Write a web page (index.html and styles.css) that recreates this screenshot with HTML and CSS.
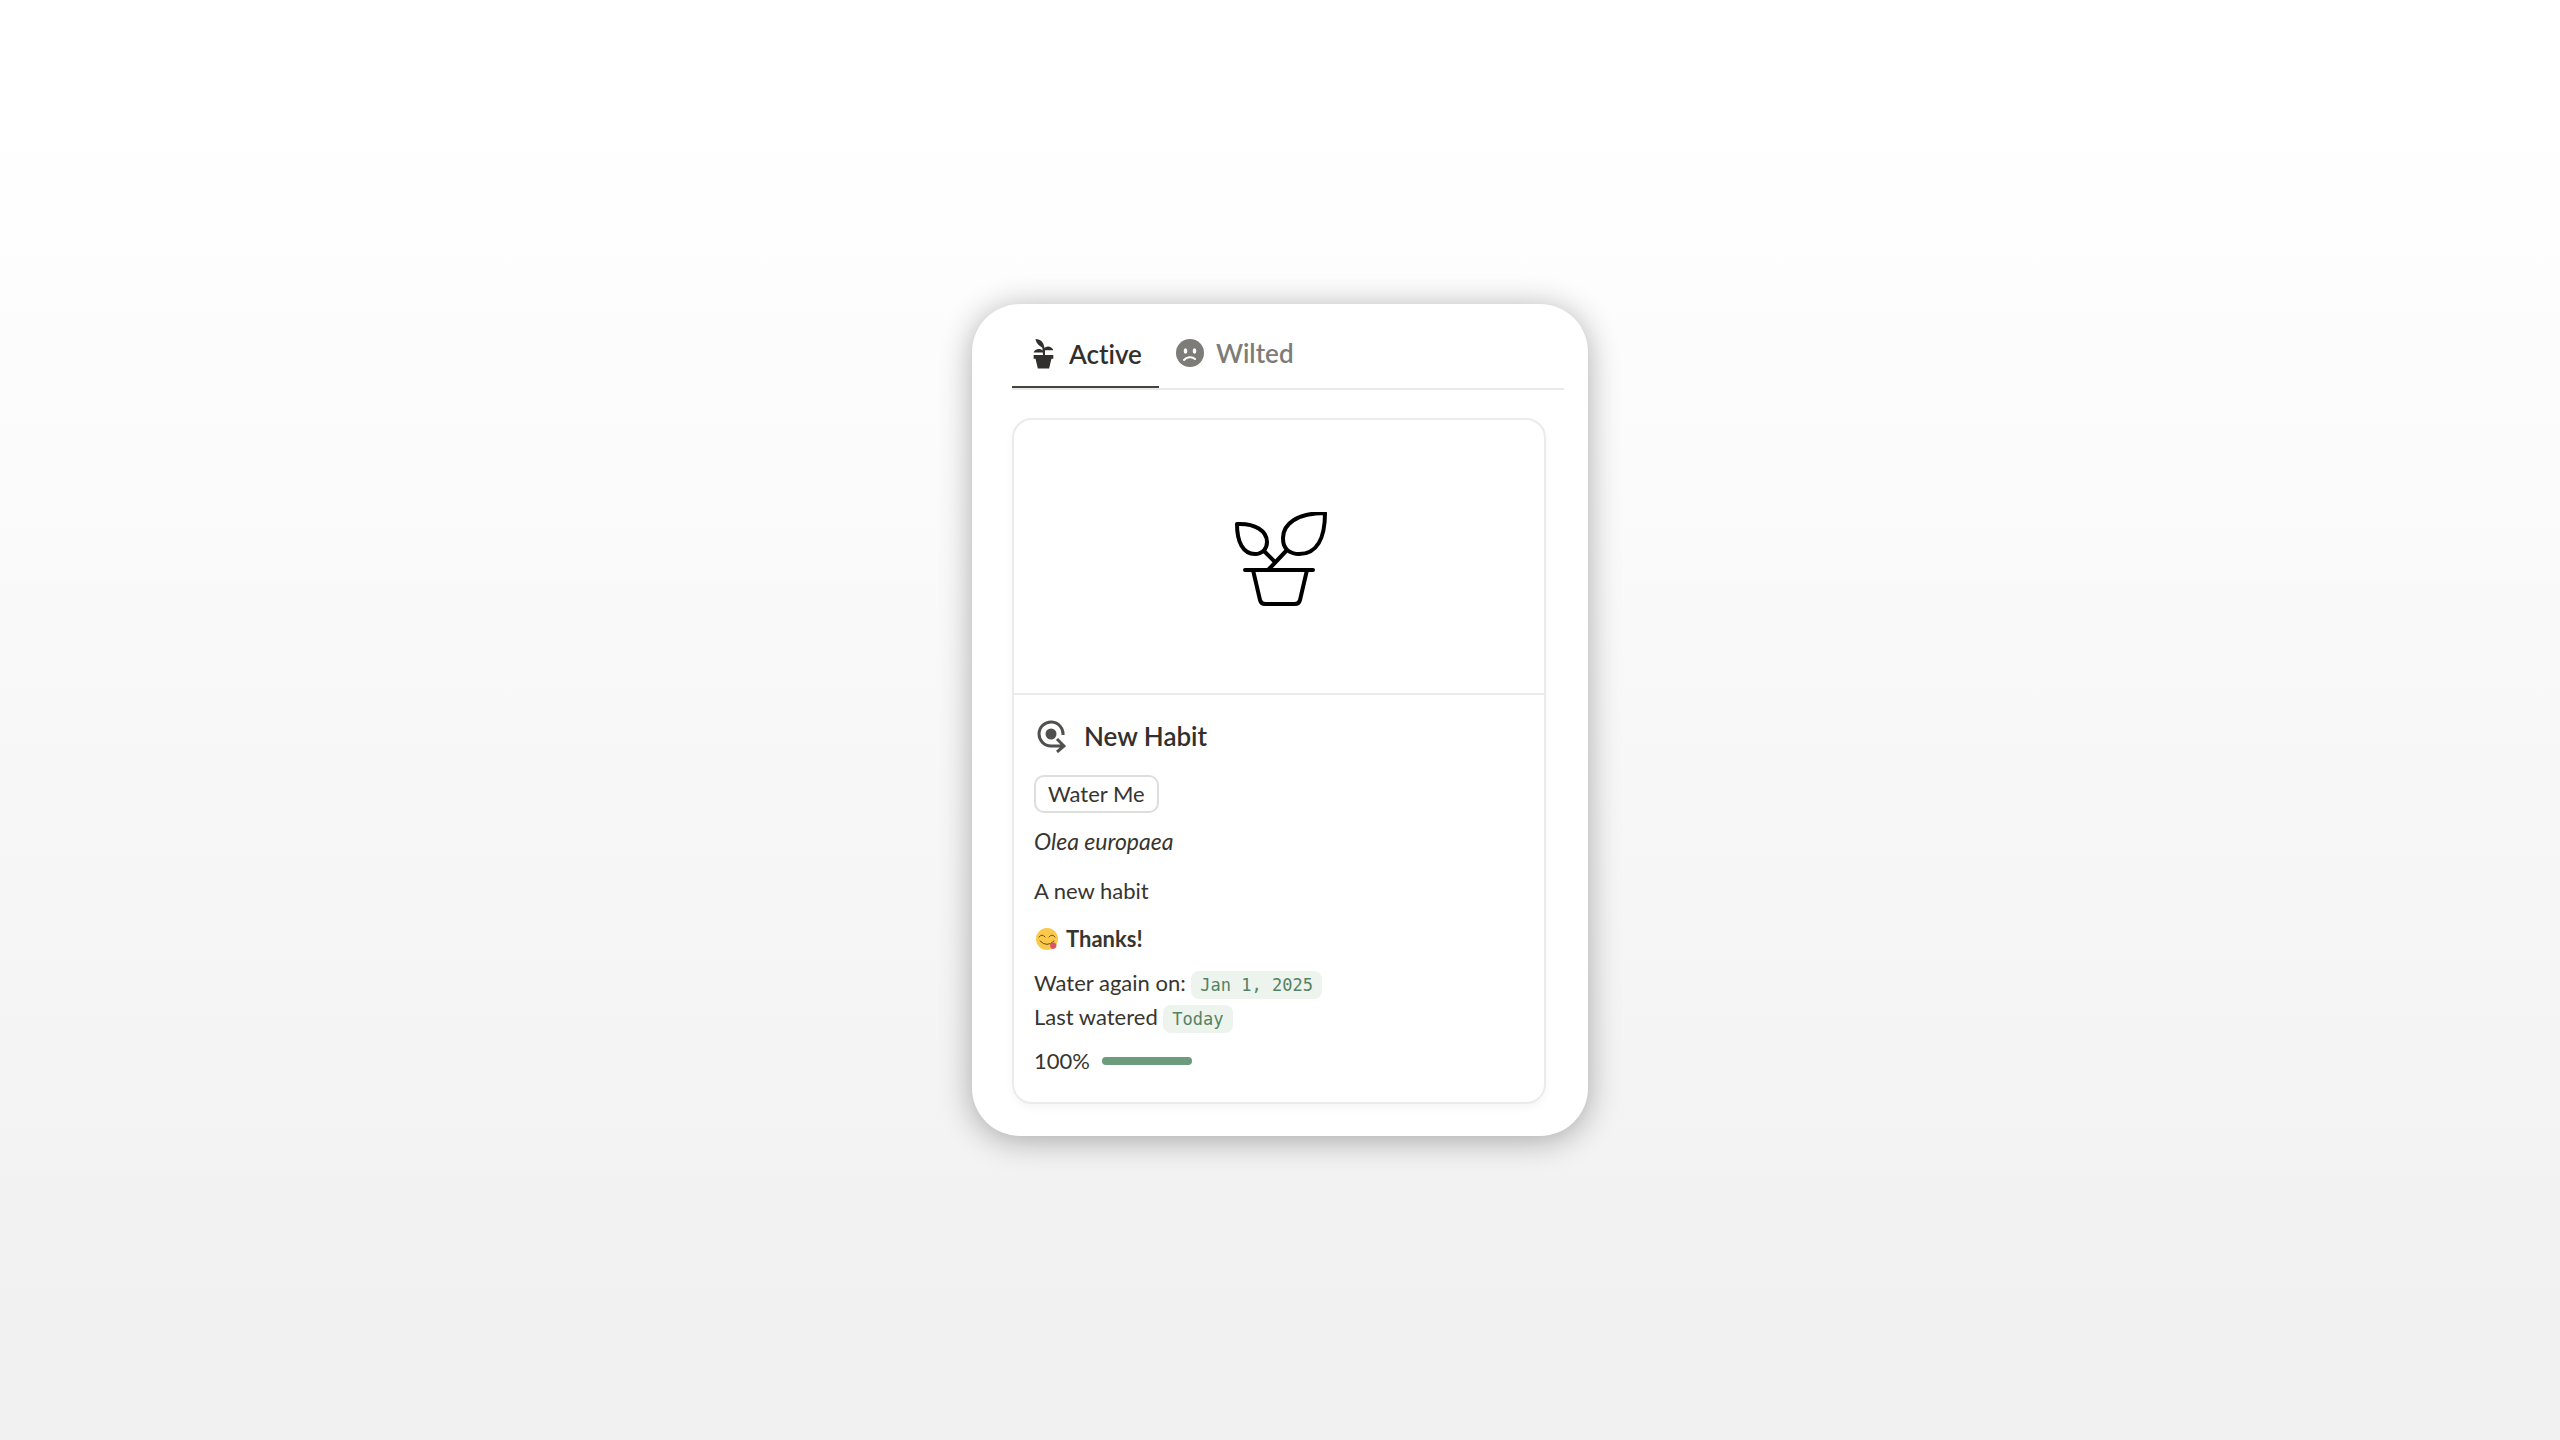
FILE: index.html
```html
<!DOCTYPE html>
<html lang="en">
<head>
  <meta charset="UTF-8">
  <meta name="viewport" content="width=device-width, initial-scale=1.0">
  <title>Habit Garden</title>
  <link rel="stylesheet" href="styles.css">
</head>
<body>

  <main class="panel">
    <nav class="tabs">
      <button type="button" class="tab active">
        <svg class="tab-icon" viewBox="0 0 28 32" aria-hidden="true">
          <path d="M4 17h21v4h-2l-2.500 10.500h-12L6 21H4z"/>
          <path d="M6 0c6 0 9 4 9.500 10C10 8 7 5 6 0z"/>
          <path d="M14 11c3-4 9-4 11 1H16v5h-2z"/>
          <path d="M4 14.500c1-4 7-5 10-2v2z"/>
          <path d="M13 6l3 5v6h-2z"/>
        </svg>
        Active
      </button>
      <button type="button" class="tab">
        <svg class="tab-icon" viewBox="0 0 28 28" aria-hidden="true">
          <circle cx="14" cy="14" r="14"/>
          <ellipse class="cut" cx="9.500" cy="12" rx="1.800" ry="2.800"/>
          <ellipse class="cut" cx="18.500" cy="12" rx="1.800" ry="2.800"/>
          <path class="cut-line" d="M8 21c2.500-3 8-4 11-1"/>
        </svg>
        Wilted
      </button>
    </nav>

    <article class="habit-card">
      <div class="cover">
        <svg class="plant" viewBox="0 0 96 96" aria-hidden="true">
          <path d="M10 58h68M18 58l7 30q1 4 5 4h30q4 0 5-4l7-30"/>
          <path d="M2 12c18-1 30 7 30 18 0 6-4 12-12 12C8 42 2 30 2 12z"/>
          <path d="M90 1C62 1 48 12 48 26c0 6 1 8 4 12 4 3 8 4 12 4 18 0 26-16 26-41z"/>
          <path d="M52 38L34 57M29 39l11 11"/>
        </svg>
      </div>

      <div class="details">
        <h1>
          <svg class="goal" viewBox="0 0 30 34" aria-hidden="true">
            <circle class="dot" cx="15" cy="15" r="5.500"/>
            <path d="M27 16A12 12 0 1 0 15 27h13M21 20l7 7-7 6"/>
          </svg>
          New Habit
        </h1>
        <button type="button" class="water-btn">Water Me</button>
        <p class="species">Olea europaea</p>
        <p class="description">A new habit</p>
        <p class="status">
          <svg class="emoji" viewBox="0 0 22 22" aria-hidden="true">
            <circle cx="11" cy="11" r="11" fill="#fbc94a"/>
            <path class="face" d="M3 9q3-4 6 0M13 9q3-4 6 0M4 13q7 7 14 0"/>
            <path d="M14 17c0-2 3-3 5-2 3 2 1 6-2 6-2 0-3-2-3-4z" fill="#dc5267"/>
          </svg>
          Thanks!
        </p>
        <p class="date-row">Water again on: <code>Jan 1, 2025</code></p>
        <p class="date-row">Last watered <code>Today</code></p>
        <div class="health">
          <label for="health">100%</label>
          <progress id="health" value="100" max="100"></progress>
        </div>
      </div>
    </article>
  </main>

</body>
</html>
```
FILE: styles.css
```css
* {
  box-sizing: border-box;
}
body {
  margin: 0;
  min-height: 100vh;
  display: flex;
  align-items: center;
  justify-content: center;
  background: linear-gradient(#fff 8%, #f1f1f1 92%);
  font-family: Lato, sans-serif;
  font-size: 22px;
  line-height: 34px;
  font-variant-ligatures: none;
  color: #373530;
}
.panel {
  width: 100%;
  max-width: 616px;
  padding: 24px 24px 32px 40px;
  background-color: #fff;
  border-radius: 48px;
  box-shadow: 0 4px 32px rgba(0, 0, 0, 0.32);
}
.tabs {
  display: flex;
  border-bottom: 2px solid #e9e9e9;
}
.tab {
  display: flex;
  align-items: center;
  gap: 12px;
  height: 60px;
  padding: 0 17px 10px;
  border: none;
  background: none;
  font-family: inherit;
  font-size: 26px;
  font-weight: 600;
  font-variant-ligatures: none;
  color: #7d7c78;
  cursor: pointer;
}
.tab.active {
  padding-bottom: 6px;
  color: #32302c;
  border-bottom: 2px solid #44443f;
}
.tab-icon {
  width: 28px;
  height: 30px;
  fill: currentColor;
}
.cut {
  fill: #fff;
}
.cut-line {
  fill: none;
  stroke: #fff;
  stroke-width: 2;
  stroke-linecap: round;
}
.habit-card {
  margin: 28px 18px 0 0;
  border: 2px solid #ebebeb;
  border-radius: 20px;
  box-shadow: 0 4px 8px rgba(0, 0, 0, 0.04);
}
.cover {
  display: flex;
  align-items: center;
  justify-content: center;
  height: 275px;
  padding: 6px 0 0 8px;
  border-bottom: 2px solid #ebebeb;
}
.plant {
  width: 96px;
  height: 96px;
  fill: none;
  stroke: #000;
  stroke-width: 4;
  stroke-linecap: round;
  stroke-linejoin: round;
}
.details {
  padding: 24px 20px;
}
h1 {
  display: flex;
  align-items: center;
  gap: 18px;
  margin: 0 0 22px;
  padding-left: 2px;
  font-size: 26px;
  font-weight: 600;
  color: #32302c;
}
.goal {
  width: 30px;
  height: 34px;
  fill: none;
  stroke: #50504d;
  stroke-width: 3;
}
.dot {
  fill: #50504d;
  stroke: none;
}
.water-btn {
  display: block;
  height: 38px;
  padding: 0 12px;
  border: 2px solid #dededc;
  border-radius: 10px;
  background-color: #fff;
  font: inherit;
  line-height: 34px;
  color: inherit;
  cursor: pointer;
}
p {
  margin: 0;
}
.species {
  margin-top: 11px;
  font-size: 23px;
  font-style: italic;
}
.description {
  margin-top: 16px;
}
.status {
  display: flex;
  align-items: center;
  gap: 8px;
  margin: 14px 0 10px;
  font-weight: 700;
}
.emoji {
  width: 22px;
  height: 22px;
  margin-left: 2px;
}
.face {
  fill: none;
  stroke: #6c4a20;
  stroke-width: 1;
  stroke-linecap: round;
}
code {
  padding: 4px 9px;
  border-radius: 8px;
  background-color: #edf3ed;
  font-family: "DejaVu Sans Mono", monospace;
  font-size: 17px;
  line-height: 20px;
  color: #548264;
}
.health {
  display: flex;
  align-items: center;
  gap: 12px;
  margin-top: 10px;
}
progress {
  appearance: none;
  width: 90px;
  height: 8px;
  border: none;
}
progress::-webkit-progress-bar {
  border-radius: 4px;
  background-color: #e9eeea;
}
progress::-webkit-progress-value {
  border-radius: 4px;
  background-color: #6c9b7d;
}
```
